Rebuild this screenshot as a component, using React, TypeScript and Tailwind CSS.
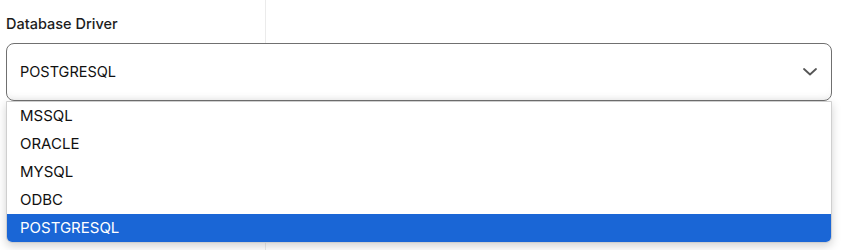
const DRIVERS = ["MSSQL", "ORACLE", "MYSQL", "ODBC", "POSTGRESQL"];

export default function App() {
  const selected = "POSTGRESQL";

  return (
    <div className="relative h-[250px] w-[850px] overflow-hidden bg-white font-['Inter',sans-serif] text-[#111]">
      {/* faint column divider behind the form */}
      <div className="absolute bottom-0 left-[265px] top-0 w-px bg-[#ebebeb]" />

      <div className="relative px-[6px] pt-[14px]">
        <label className="block text-[14.5px] font-medium leading-[20px] text-[#1c1c1c]">
          Database Driver
        </label>

        <div className="mt-[9px] flex h-[58px] w-[826px] items-center justify-between rounded-[8px] border border-[#707070] bg-white px-[13px] shadow-[inset_0_-7px_8px_-6px_rgba(0,0,0,0.08)]">
          <span className="text-[14.5px]">{selected}</span>
          <svg width="14" height="8" viewBox="0 0 14 8" fill="none" className="mr-[1px]">
            <path d="M1 1l6 5.5L13 1" stroke="#555" strokeWidth="1.8" strokeLinecap="round" strokeLinejoin="round" />
          </svg>
        </div>

        <ul className="w-[826px] overflow-hidden rounded-b-[6px] border border-[#cfcfcf] bg-white shadow-[0_3px_10px_rgba(0,0,0,0.18)]">
          {DRIVERS.map((d) => (
            <li
              key={d}
              className={
                d === selected
                  ? "flex h-[28px] items-center bg-[#1a66d6] px-[13px] text-[15px] text-white"
                  : "flex h-[28px] items-center px-[13px] text-[15px]"
              }
            >
              {d}
            </li>
          ))}
        </ul>
      </div>
    </div>
  );
}
